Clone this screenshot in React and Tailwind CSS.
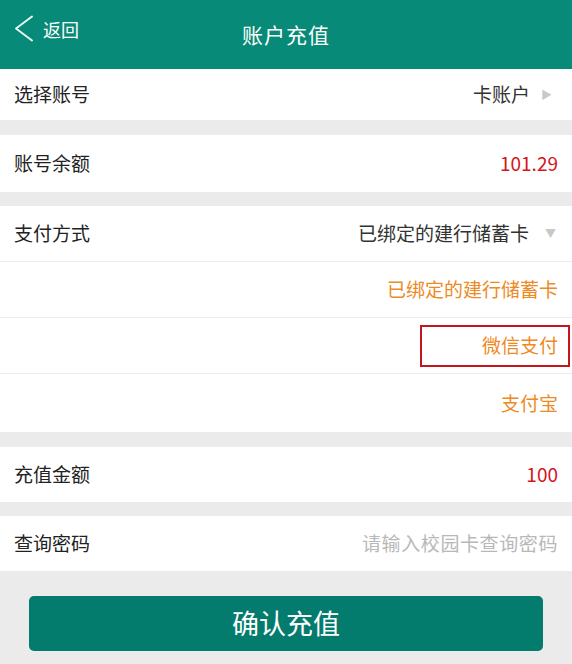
const cjk = { fontFamily: '"Noto Sans CJK SC", "Noto Sans", sans-serif' };

const Row = ({ label, children, border = false, h = "h-[56px]" }) => (
  <div
    className={`flex ${h} items-center justify-between bg-white pl-[14px] pr-[14px] ${
      border ? "border-b border-[#ececec]" : ""
    }`}
  >
    <span className="text-[19px] text-[#222]">{label}</span>
    {children}
  </div>
);

const payOptions = ["已绑定的建行储蓄卡", "微信支付", "支付宝"];

export default function App() {
  return (
    <div className="min-h-[664px] w-[572px] bg-[#ebebeb]" style={cjk}>
      {/* top bar */}
      <header className="relative flex h-[69px] items-center justify-center bg-[#078a78] text-white">
        <div className="absolute left-[14px] top-[15px] flex items-center gap-[9px]">
          <svg width="20" height="27" viewBox="0 0 20 27" fill="none">
            <path d="M18 1.5 L2 13.5 L18 25.5" stroke="#e6f5f2" strokeWidth="2" strokeLinecap="round" strokeLinejoin="round" />
          </svg>
          <span className="text-[18px] leading-none">返回</span>
        </div>
        <h1 className="text-[21px] tracking-[1px]">账户充值</h1>
      </header>

      <Row label="选择账号" h="h-[51px]">
        <div className="flex items-center gap-[11px] pr-[6px]">
          <span className="text-[19px] text-[#333]">卡账户</span>
          <span className="text-[11px] text-[#c8c8c8]">▶</span>
        </div>
      </Row>

      <div className="h-[15px]" />
      <Row label="账号余额" h="h-[57px]">
        <span className="text-[19px] text-[#d7141c]">101.29</span>
      </Row>

      <div className="h-[14px]" />
      <div>
        <Row label="支付方式" border>
          <div className="flex items-center gap-[16px] pr-[2px]">
            <span className="text-[19px] text-[#333]">已绑定的建行储蓄卡</span>
            <span className="text-[11px] text-[#c8c8c8]">▼</span>
          </div>
        </Row>
        {payOptions.map((opt, i) => (
          <div
            key={opt}
            className={`flex items-center justify-end bg-white pr-[14px] ${
              i < payOptions.length - 1 ? "h-[56px] border-b border-[#ececec]" : "h-[58px]"
            }`}
          >
            {opt === "微信支付" ? (
              <span className="-mr-[12px] flex h-[42px] w-[150px] items-center justify-end border-2 border-[#c4161c] pr-[10px] text-[19px] text-[#ee8a24]">
                {opt}
              </span>
            ) : (
              <span className="text-[19px] text-[#ee8a24]">{opt}</span>
            )}
          </div>
        ))}
      </div>

      <div className="h-[15px]" />
      <Row label="充值金额" h="h-[55px]">
        <span className="text-[19px] text-[#d7141c]">100</span>
      </Row>

      <div className="h-[14px]" />
      <Row label="查询密码" h="h-[55px]">
        <span className="text-[19px] tracking-[0.6px] text-[#b8b8b8]">请输入校园卡查询密码</span>
      </Row>

      <div className="px-[29px] pt-[25px] pb-[13px]">
        <button className="flex h-[55px] w-full items-center justify-center rounded-[5px] bg-[#037b6d] text-[27px] text-white">
          确认充值
        </button>
      </div>
    </div>
  );
}
